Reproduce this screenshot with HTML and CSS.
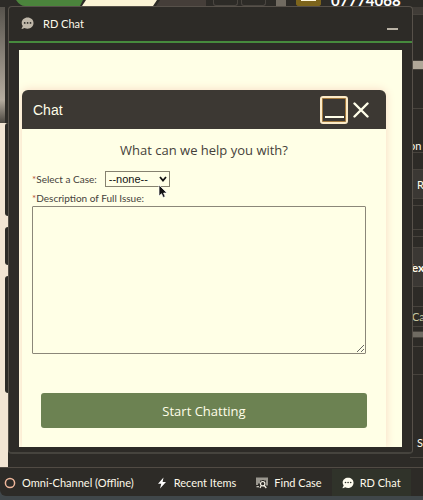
FILE: index.html
```html
<!DOCTYPE html>
<html lang="en">
<head>
  <meta charset="UTF-8" />
  <meta name="viewport" content="width=device-width, initial-scale=1.0"/>
  <title>RD Chat</title>
  <link rel="stylesheet" href="styles.css">
</head>
<body>
  <div class="console">
    <!-- Record page behind the chat panel -->
    <div class="page">
      <div class="page-top">
        <svg class="path-steps" width="210" height="7" viewBox="0 0 210 7">
          <path d="M16 0H83L80 6H25Q20 6 16 0Z" fill="#4b843c"/>
          <path d="M86 0H157L153 6H82Z" fill="#fcf4d6"/>
          <path d="M160 0H206V6H156Z" fill="#453e39"/>
        </svg>
        <span class="slot"></span>
        <span class="slot"></span>
        <span class="scroll-stub"></span>
        <span class="case-icon"></span>
        <span class="case-number">07774068</span>
      </div>
      <div class="page-main">
        <div class="left-edge">
          <div class="card fade"></div>
          <div class="card first"></div>
          <div class="card small"></div>
          <div class="card last"></div>
        </div>
        <div class="right-edge">
          <div class="row band"></div>
          <div class="row h46"></div>
          <div class="row scrollbar"></div>
          <div class="row h39"></div>
          <div class="row h44 low"><span class="cut">on</span></div>
          <div class="row h17"></div>
          <div class="row h29 light">R</div>
          <div class="row h7"></div>
          <div class="row h24"></div>
          <div class="row h7"></div>
          <div class="row h11"></div>
          <div class="row h39 light"><strong>Tex</strong></div>
          <div class="row h20"></div>
          <div class="row h20"><span class="case-label">Ca</span></div>
          <div class="row h5"></div>
          <div class="row thumb"></div>
          <div class="row h9"></div>
          <div class="row h28"></div>
          <div class="row h83 low">S</div>
          <div class="row rest"></div>
        </div>
      </div>
    </div>

    <section class="panel">
      <header class="panel-header">
        <svg width="13" height="13" viewBox="0 0 13 13">
          <path d="M6.600 .5C3.300 .5.700 2.900.700 5.900c0 1.200.4 2.300 1.100 3.200L.6 11.400c-.1.300.1.600.4.500l2.500-.9c.9.500 2 .7 3.100.7 3.300 0 5.900-2.500 5.900-5.700S9.900.5 6.600.5z" fill="#c0b8aa"/>
          <circle cx="3.700" cy="5.900" r=".9" fill="#2d2b27"/>
          <circle cx="6.600" cy="5.900" r=".9" fill="#2d2b27"/>
          <circle cx="9.500" cy="5.900" r=".9" fill="#2d2b27"/>
        </svg>
        <h2>RD Chat</h2>
        <button class="panel-minimize" type="button" aria-label="Minimize panel"></button>
      </header>
      <div class="panel-body">
        <div class="chat">
          <div class="chat-header">
            <h1>Chat</h1>
            <button class="chat-minimize" type="button" aria-label="Minimize chat"></button>
            <button class="chat-close" type="button" aria-label="Close chat">
              <svg width="16" height="16" viewBox="0 0 16 16"><path d="M1.500 1.500L14.500 14.500M14.500 1.500L1.500 14.500" stroke="#fffee9" stroke-width="2.400" stroke-linecap="round"/></svg>
            </button>
          </div>
          <form class="chat-form">
            <p class="question">What can we help you with?</p>
            <div class="field">
              <label for="case"><span class="required">*</span>Select a Case:</label>
              <div class="select-box">
                <select id="case"><option>--none--</option></select>
                <svg class="arrow" width="8" height="6" viewBox="0 0 8 6"><path d="M1 1L4 4.500L7 1" fill="none" stroke="#111" stroke-width="1.800"/></svg>
                <svg class="cursor" width="10" height="15" viewBox="0 0 10 15"><path d="M1 1V12L3.500 9.700L5.200 13.500L7.200 12.600L5.600 9H9Z" fill="#111" stroke="#fff" stroke-width=".7"/></svg>
              </div>
            </div>
            <label for="issue"><span class="required">*</span>Description of Full Issue:</label>
            <textarea id="issue"></textarea>
            <button class="start" type="button">Start Chatting</button>
          </form>
        </div>
      </div>
    </section>

    <footer class="utility-bar">
      <button type="button" class="util omni">
        <svg width="12" height="12" viewBox="0 0 12 12"><circle cx="6" cy="6" r="4.600" fill="none" stroke="#efb79b" stroke-width="1.500"/></svg>
        Omni-Channel (Offline)
      </button>
      <button type="button" class="util recent">
        <svg width="12" height="12" viewBox="0 0 12 12"><path d="M7.500 .5L2 6.800H5.300L4 11.500L10 4.900H6.600Z" fill="#fff"/></svg>
        Recent Items
      </button>
      <button type="button" class="util find">
        <svg width="12" height="12" viewBox="0 0 12 12">
          <path d="M1 .5V8M3 .5V6.500M5 .5V3.500M7 .5V3M9 .5V3.500M11 .5V8.500M.5 9.800H3" stroke="#f5f1e6" stroke-width="1.100"/>
          <circle cx="6.700" cy="6.700" r="2.200" fill="none" stroke="#f5f1e6" stroke-width="1.200"/>
          <path d="M8.200 8.500L10.300 11M5.300 8.500L4 11" stroke="#f5f1e6" stroke-width="1.200"/>
        </svg>
        Find Case
      </button>
      <button type="button" class="util active">
        <svg width="12" height="12" viewBox="0 0 13 13">
          <path d="M6.600 .8C3.300.8.700 3.100.700 6c0 1.200.4 2.200 1.100 3.100L.6 11.600c-.1.300.1.600.4.500l2.500-.9c.9.500 2 .7 3.100.7 3.300 0 5.900-2.500 5.900-5.700S9.900.8 6.600.8z" fill="#fffdf0"/>
          <circle cx="3.800" cy="6" r=".9" fill="#30332a"/>
          <circle cx="6.600" cy="6" r=".9" fill="#30332a"/>
          <circle cx="9.400" cy="6" r=".9" fill="#30332a"/>
        </svg>
        RD Chat
      </button>
    </footer>
  </div>
</body>
</html>
```

FILE: styles.css
```css
* {
  box-sizing: border-box;
}
body {
  margin: 0;
  font-family: Lato, sans-serif;
  font-size: 11px;
  color: #fdf9ea;
  background: #40474a;
}
h1, h2, p {
  margin: 0;
  font-weight: normal;
}
button {
  font-family: inherit;
  color: inherit;
  background: none;
  border: none;
  padding: 0;
  cursor: pointer;
}
svg {
  display: block;
  flex: none;
}
.console {
  display: grid;
  grid-template-columns: minmax(0, 1fr);
  grid-template-rows: minmax(0, 1fr) auto;
  height: 100vh;
  overflow: hidden;
}

/* page behind */
.page {
  grid-area: 1 / 1;
  display: flex;
  flex-direction: column;
  overflow: hidden;
}
.page-top {
  display: flex;
  height: 7px;
  background: #2d2b27;
}
.slot {
  width: 25px;
  height: 6px;
  margin-left: 3px;
  border: 1px solid #4a4640;
  border-top: none;
  border-radius: 0 0 3px 3px;
}
.scroll-stub {
  width: 10px;
  margin-left: 10px;
  background: #716b61;
}
.case-icon {
  width: 25px;
  height: 6px;
  margin-left: 10px;
  border: solid #7c641c;
  border-width: 0 5px 5px;
  border-radius: 0 0 3px 3px;
  background: #fff8dc;
}
.case-number {
  margin-left: 10px;
  margin-top: -10px;
  font-size: 15px;
  line-height: 20px;
  font-weight: bold;
  color: #fff;
}
.page-main {
  flex: 1;
  min-height: 0;
  display: flex;
  justify-content: space-between;
  background: #2d2b27;
}
.left-edge {
  width: 8px;
  display: flex;
  flex-direction: column;
  gap: 11px;
  background: #f2e5d3;
}
.card {
  flex: none;
  margin-left: 5px;
  background: #2d2b27;
  border-radius: 3px 0 0 3px;
}
.card.fade {
  height: 116px;
  margin: 0 0 -11px;
  border-right: 3px solid #2d2b27;
  border-radius: 0;
  background: linear-gradient(#57534c, #b5ac9f 80%, #4a463f);
}
.card.first {
  height: 93px;
}
.card.small {
  height: 38px;
}
.card.last {
  height: 117px;
}
.right-edge {
  width: 13px;
  display: flex;
  flex-direction: column;
  overflow: hidden;
}
.row {
  flex: none;
  display: flex;
  align-items: center;
  padding-left: 7px;
  white-space: nowrap;
  border-bottom: 1px solid #47433d;
}
.row.low {
  align-items: flex-end;
}
.row.h83 {
  padding-bottom: 8px;
}
.row strong {
  margin-left: -11px;
  font-size: 12px;
}
.case-label {
  margin-left: -5px;
  color: #c6c8a3;
}
.cut {
  margin-left: -8px;
}
.light {
  background: #3b3834;
}
.band {
  height: 8px;
  background: #403c37;
}
.scrollbar {
  height: 9px;
  background: #b0a798;
}
.thumb {
  height: 6px;
  background: #6f6b62;
}
.h5 { height: 5px; }
.h7 { height: 7px; }
.h9 { height: 9px; }
.h11 { height: 11px; }
.h17 { height: 17px; }
.h20 { height: 20px; }
.h24 { height: 24px; }
.h28 { height: 28px; }
.h29 { height: 29px; }
.h39 { height: 39px; }
.h44 { height: 44px; }
.h46 { height: 46px; }
.h83 { height: 83px; }
.rest {
  flex: 1;
  border: none;
}

/* docked panel */
.panel {
  grid-area: 1 / 1;
  display: flex;
  flex-direction: column;
  min-height: 0;
  margin: 6px 10px 13px 8px;
  background: #2d2b27;
  border: 1px solid #57514a;
  border-bottom: 2px solid #46443e;
  border-radius: 4px;
}
.panel-header {
  display: flex;
  align-items: center;
  gap: 9px;
  height: 36px;
  padding: 0 14px 1px 12px;
  border-bottom: 2px solid #468a3d;
}
.panel-header h2 {
  font-size: 11px;
}
.panel-minimize {
  width: 11px;
  height: 12px;
  margin-left: auto;
  border-bottom: 2px solid #b9b2a5;
}
.panel-body {
  flex: 1;
  min-height: 0;
  margin: 7px 10px 5px;
  padding: 40px 16px 0 3px;
  overflow: hidden;
  background: #ffffe6;
}
.chat {
  min-height: 100%;
  border-radius: 6px 6px 0 0;
  box-shadow: 0 0 10px #f8d9c4;
  background: #ffffe6;
  color: #45413a;
}
.chat-header {
  display: flex;
  align-items: center;
  height: 39px;
  padding: 0 17px 0 11px;
  border-radius: 6px 6px 0 0;
  background: #3c3833;
  color: #fffee9;
}
.chat-header h1 {
  font-family: "Liberation Sans", sans-serif;
  font-size: 14px;
}
.chat-minimize {
  display: flex;
  align-items: flex-end;
  justify-content: center;
  width: 28px;
  height: 28px;
  margin-left: auto;
  padding-bottom: 4px;
  border: 2px solid #fbeac6;
  border-radius: 3px;
  box-shadow: inset 0 0 0 1px #a47a3d;
}
.chat-minimize::after {
  content: "";
  width: 19px;
  height: 2px;
  background: #fffee9;
}
.chat-close {
  margin-left: 5px;
}
.chat-form {
  display: flex;
  flex-direction: column;
  padding: 12px 20px 0 10px;
}
.question {
  padding-left: 10px;
  font-family: "Open Sans", sans-serif;
  font-size: 13px;
  line-height: 18px;
  text-align: center;
}
.field {
  display: flex;
  align-items: center;
  gap: 8px;
  margin: 12px 0 3px;
}
label {
  font-size: 10px;
  line-height: 16px;
}
.required {
  color: #b5523a;
}
.select-box {
  position: relative;
}
select {
  display: block;
  appearance: none;
  width: 65px;
  height: 16px;
  padding: 0 3px;
  border: 1px solid #85816f;
  border-radius: 0;
  background: #ffffe6;
  font-family: "Liberation Sans", sans-serif;
  font-size: 11px;
  color: #111;
}
.arrow {
  position: absolute;
  right: 3px;
  top: 5px;
  pointer-events: none;
}
.cursor {
  position: absolute;
  right: 2px;
  top: 13px;
  pointer-events: none;
}
textarea {
  height: 148px;
  border: 1px solid #8b8779;
  border-radius: 1px;
  background: #ffffe6;
  font-family: inherit;
}
.start {
  height: 35px;
  margin: 39px -1px 0 9px;
  border-radius: 3px;
  background: #6c8252;
  font-family: "Open Sans", sans-serif;
  font-size: 13px;
  color: #fffee9;
}

/* bottom bar */
.utility-bar {
  grid-area: 2 / 1;
  display: flex;
  height: 29px;
  margin-bottom: 4px;
  padding-top: 1px;
  border-top: 1px solid #514b44;
  border-radius: 0 0 0 6px;
  background: #2d2b27;
}
.util {
  display: flex;
  align-items: center;
  gap: 6px;
  padding: 0 10px;
  font-size: 11px;
  white-space: nowrap;
}
.util.omni {
  padding: 0 12px 0 4px;
}
.util.active {
  background: #30332a;
}
```
